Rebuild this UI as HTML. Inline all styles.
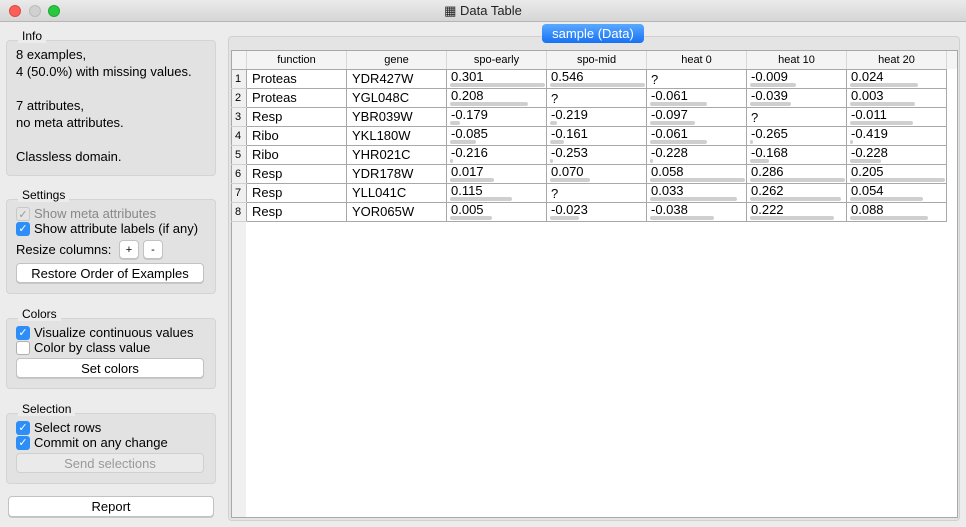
<!DOCTYPE html>
<html><head><meta charset="utf-8"><style>
*{box-sizing:border-box;margin:0;padding:0}
body{width:966px;height:527px;background:#ececec;font-family:"Liberation Sans",sans-serif;font-size:13px;color:#000;position:relative;overflow:hidden}
.abs{position:absolute}
.title{left:0;top:0;width:966px;height:22px;background:linear-gradient(#ebebeb,#d6d6d6);border-bottom:1px solid #b5b5b5;text-align:center;line-height:22px;font-size:13px;color:#222}
.dot{width:12px;height:12px;border-radius:50%;top:5px}
.box{background:#e2e2e2;border:1px solid #d4d4d4;border-radius:4px}
.lbl{font-size:12px}
.btn{background:#fff;border:1px solid #c2c2c2;border-radius:4px;text-align:center;font-size:13px;line-height:19px;box-shadow:0 1px 0 #c8c8c8}
.cb{width:14px;height:14px;border-radius:3px;background:#2e8ef8;color:#fff;font-size:11px;line-height:14px;text-align:center}
.cbo{width:14px;height:14px;border-radius:3px;background:#fff;border:1px solid #b0b0b0}
table{border-collapse:collapse;position:absolute;left:231px;top:51px;table-layout:fixed}
td,th{border:1px solid #a8a8a8;height:19px;position:relative;font-weight:normal;white-space:nowrap;overflow:hidden}
th{height:18px;background:#f4f4f4;font-size:11px;border-top:none;border-color:#d8d8d8;border-bottom:1px solid #a8a8a8}
td{background:#fff;font-size:13px;padding-left:5px}
td.n{background:#f0f0f0;font-size:11px;padding-left:3px;border-color:#d0d0d0 #a8a8a8}
td.v{padding-left:4px;vertical-align:top;line-height:13px;padding-top:0}
.bar{position:absolute;left:3px;bottom:1px;height:4px;background:#cfcfcf;border-radius:2px}
</style></head><body>
<div class="abs title">▦ Data Table</div>
<div class="abs dot" style="left:9px;background:#fc5f57;border:1px solid #de4a42"></div>
<div class="abs dot" style="left:29px;background:#d0d0d0;border:1px solid #bcbcbc"></div>
<div class="abs dot" style="left:48px;background:#2ac840;border:1px solid #1ea932"></div>

<div class="abs box" style="left:6px;top:40px;width:210px;height:136px"></div>
<div class="abs lbl" style="left:18px;top:29px;background:#ececec;padding:0 4px">Info</div>
<div class="abs" style="left:16px;top:46px;line-height:17px">8 examples,<br>4 (50.0%) with missing values.<br><br>7 attributes,<br>no meta attributes.<br><br>Classless domain.</div>

<div class="abs box" style="left:6px;top:199px;width:210px;height:95px"></div>
<div class="abs lbl" style="left:18px;top:188px;background:#ececec;padding:0 4px">Settings</div>
<div class="abs cb" style="left:16px;top:207px;background:#e4e4e4;border:1px solid #c8c8c8;color:#999">✓</div>
<div class="abs" style="left:34px;top:206px;color:#888">Show meta attributes</div>
<div class="abs cb" style="left:16px;top:222px">✓</div>
<div class="abs" style="left:34px;top:221px">Show attribute labels (if any)</div>
<div class="abs" style="left:16px;top:242px">Resize columns:</div>
<div class="abs btn" style="left:119px;top:240px;width:20px;height:19px;font-size:11px">+</div>
<div class="abs btn" style="left:143px;top:240px;width:20px;height:19px;font-size:11px">-</div>
<div class="abs btn" style="left:16px;top:263px;width:188px;height:20px">Restore Order of Examples</div>

<div class="abs box" style="left:6px;top:318px;width:210px;height:71px"></div>
<div class="abs lbl" style="left:18px;top:307px;background:#ececec;padding:0 4px">Colors</div>
<div class="abs cb" style="left:16px;top:326px">✓</div>
<div class="abs" style="left:34px;top:325px">Visualize continuous values</div>
<div class="abs cbo" style="left:16px;top:341px"></div>
<div class="abs" style="left:34px;top:340px">Color by class value</div>
<div class="abs btn" style="left:16px;top:358px;width:188px;height:20px">Set colors</div>

<div class="abs box" style="left:6px;top:413px;width:210px;height:71px"></div>
<div class="abs lbl" style="left:18px;top:402px;background:#ececec;padding:0 4px">Selection</div>
<div class="abs cb" style="left:16px;top:421px">✓</div>
<div class="abs" style="left:34px;top:420px">Select rows</div>
<div class="abs cb" style="left:16px;top:436px">✓</div>
<div class="abs" style="left:34px;top:435px">Commit on any change</div>
<div class="abs btn" style="left:16px;top:453px;width:188px;height:20px;background:#eaeaea;color:#999;box-shadow:none;border-color:#d0d0d0">Send selections</div>

<div class="abs btn" style="left:8px;top:496px;width:206px;height:21px">Report</div>

<div class="abs" style="left:228px;top:36px;width:732px;height:485px;background:#e4e4e4;border:1px solid #d0d0d0;border-radius:4px"></div>
<div class="abs" style="left:542px;top:24px;width:102px;height:19px;border-radius:4px;background:linear-gradient(#5aa8ff,#1672f4);color:#fff;text-align:center;line-height:19px;font-size:13px">sample (Data)</div>
<div class="abs" style="left:231px;top:50px;width:727px;height:468px;background:#fff;border:1px solid #a8a8a8"></div>
<div class="abs" style="left:232px;top:51px;width:725px;height:18px;background:#f4f4f4"></div>
<div class="abs" style="left:232px;top:69px;width:14px;height:448px;background:#f0f0f0"></div>
<table id="t"></table>
<script>
var cols=["function","gene","spo-early","spo-mid","heat 0","heat 10","heat 20"];
var d=[["Proteas","YDR427W",.301,.546,null,-.009,.024],["Proteas","YGL048C",.208,null,-.061,-.039,.003],["Resp","YBR039W",-.179,-.219,-.097,null,-.011],["Ribo","YKL180W",-.085,-.161,-.061,-.265,-.419],["Ribo","YHR021C",-.216,-.253,-.228,-.168,-.228],["Resp","YDR178W",.017,.070,.058,.286,.205],["Resp","YLL041C",.115,null,.033,.262,.054],["Resp","YOR065W",.005,-.023,-.038,.222,.088]];
var h='<colgroup><col style="width:15px">';for(var i=0;i<7;i++)h+='<col style="width:100px">';h+='</colgroup><tr><th style="border-left:none"></th>';
cols.forEach(function(c){h+='<th>'+c+'</th>'});h+='</tr>';
var mn=[],mx=[];for(var c=2;c<7;c++){var v=d.map(function(r){return r[c]}).filter(function(x){return x!==null});mn[c]=Math.min.apply(0,v);mx[c]=Math.max.apply(0,v);}
d.forEach(function(r,i){h+='<tr><td class="n">'+(i+1)+'</td><td>'+r[0]+'</td><td>'+r[1]+'</td>';
for(var c=2;c<7;c++){var x=r[c];if(x===null)h+='<td class="v" style="padding-top:3px">?</td>';else{var w=3+(x-mn[c])/(mx[c]-mn[c])*92;h+='<td class="v">'+x.toFixed(3)+'<div class="bar" style="width:'+w.toFixed(0)+'px"></div></td>';}}
h+='</tr>'});
document.getElementById('t').innerHTML=h;
</script>
</body></html>
